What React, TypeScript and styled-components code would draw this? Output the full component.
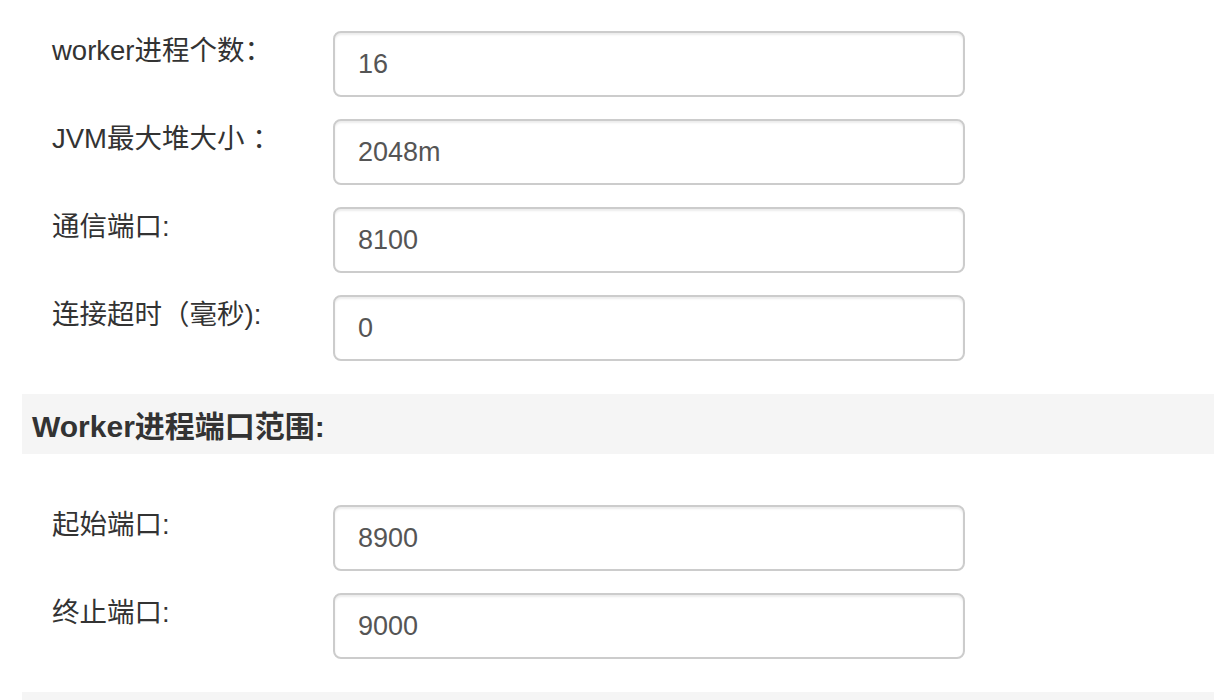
import React from "react";
import styled, { createGlobalStyle } from "styled-components";

const GlobalStyle = createGlobalStyle`
  html, body {
    margin: 0;
    padding: 0;
    background: #ffffff;
    overflow: hidden;
  }
  body {
    font-family: "Liberation Sans", "Noto Sans CJK SC", sans-serif;
    color: #333333;
  }
`;

const Page = styled.div`
  padding: 31px 0 0 22px;
  width: 1192px;
`;

const Group = styled.div`
  display: flex;
  align-items: flex-start;
  padding-left: 30px;
  margin-bottom: 22px;
`;

const Label = styled.label`
  width: 281px;
  flex: none;
  font-size: 27.5px;
  line-height: 38px;
  padding-top: 1px;
  color: #333333;
`;

const Input = styled.input`
  box-sizing: border-box;
  width: 632px;
  height: 66px;
  border: 2px solid #cccccc;
  border-radius: 8px;
  padding: 0 23px;
  font-family: "Liberation Sans", "Noto Sans CJK SC", sans-serif;
  font-size: 27px;
  color: #555555;
  background: #ffffff;
  outline: none;
  box-shadow: inset 0 2px 2px rgba(0, 0, 0, 0.075);
`;

const SectionHeader = styled.div`
  height: 60px;
  display: flex;
  align-items: center;
  padding-left: 10px;
  margin-top: 33px;
  margin-bottom: 51px;
  background: #f5f5f5;
  font-size: 30px;
  font-weight: bold;
  color: #333333;
`;

type Field = { label: string; value: string };

const general: Field[] = [
  { label: "worker进程个数：", value: "16" },
  { label: "JVM最大堆大小 ：", value: "2048m" },
  { label: "通信端口:", value: "8100" },
  { label: "连接超时（毫秒):", value: "0" },
];

const ports: Field[] = [
  { label: "起始端口:", value: "8900" },
  { label: "终止端口:", value: "9000" },
];

const FieldRow = ({ label, value }: Field) => (
  <Group>
    <Label>{label}</Label>
    <Input type="text" defaultValue={value} />
  </Group>
);

export default function App() {
  return (
    <>
      <GlobalStyle />
      <Page>
        {general.map((f) => (
          <FieldRow key={f.label} {...f} />
        ))}
        <SectionHeader>Worker进程端口范围:</SectionHeader>
        {ports.map((f) => (
          <FieldRow key={f.label} {...f} />
        ))}
        <SectionHeader />
      </Page>
    </>
  );
}
